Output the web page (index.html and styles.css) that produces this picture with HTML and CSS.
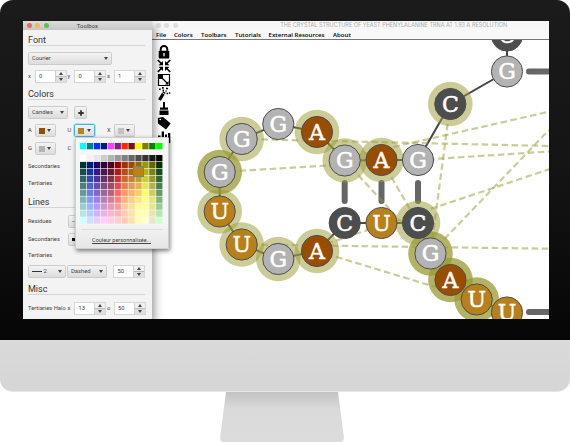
FILE: index.html
```html
<!DOCTYPE html>
<html lang="en">
<head>
<meta charset="utf-8">
<title>RNA structure editor</title>
<link rel="stylesheet" href="styles.css">
</head>
<body>
<div class="monitor">
  <div class="screen">
    <section class="toolbox">
      <header class="titlebar"><i class="dot red"></i><i class="dot amber"></i><i class="dot green"></i><span>Toolbox</span></header>
      <div class="panel">
        <h2>Font</h2>
        <div class="row r-font"><div class="select wide">Courier</div></div>
        <div class="row grid r-xys">
          <div class="cell"><label>x</label><div class="spin"><b>0</b><i></i></div></div>
          <div class="cell"><label>y</label><div class="spin"><b>0</b><i></i></div></div>
          <div class="cell"><label>s</label><div class="spin"><b>1</b><i></i></div></div>
        </div>
        <h2>Colors</h2>
        <div class="row r-font"><div class="select theme">Candies</div><div class="select plus"><svg viewBox="0 0 6 6"><path d="M3 .3v5.400M.3 3h5.400"/></svg></div></div>
        <div class="row grid r-swatch">
          <div class="cell"><label>A</label><div class="select sw"><i class="chip brown"></i></div></div>
          <div class="cell anchor"><label>U</label><div class="select sw focus"><i class="chip gold"></i></div>
            <div class="picker">
              <svg class="basic" id="basic" viewBox="0 0 83 7"></svg>
              <svg class="shades" id="shades" viewBox="0 0 83 69"></svg>
              <i class="picked"></i>
              <div class="custom">Couleur personnalisée...</div>
            </div>
          </div>
          <div class="cell"><label>X</label><div class="select sw"><i class="chip silver"></i></div></div>
        </div>
        <div class="row grid r-swatch2">
          <div class="cell"><label>G</label><div class="select sw"><i class="chip gray"></i></div></div>
          <div class="cell"><label>C</label></div>
        </div>
        <div class="row text t1">Secondaries</div>
        <div class="row text t2">Tertiaries</div>
        <h2 class="lines">Lines</h2>
        <div class="row r-line"><span>Residues</span><div class="select stub">–</div></div>
        <div class="row r-line second"><span>Secondaries</span><div class="select stub"><i class="square"></i></div></div>
        <div class="row text t3">Tertiaries</div>
        <div class="row r-style"><div class="select w38"><i class="stroke"></i>2</div><div class="select w40">Dashed</div><div class="spin"><b>50</b><i></i></div></div>
        <h2>Misc</h2>
        <div class="row grid r-halo">
          <div class="cell"><span>Tertiaries Halo</span></div>
          <div class="cell"><label>s</label><div class="spin"><b>13</b><i></i></div></div>
          <div class="cell"><label>o</label><div class="spin"><b>50</b><i></i></div></div>
        </div>
      </div>
    </section>
    <section class="editor">
      <header class="titlebar light"><i class="dot"></i><i class="dot"></i><i class="dot"></i><span>THE CRYSTAL STRUCTURE OF YEAST PHENYLALANINE TRNA AT 1.93 A RESOLUTION</span></header>
      <nav><span class="m1">File</span><span class="m2">Colors</span><span class="m3">Toolbars</span><span class="m4">Tutorials</span><span class="m5">External Resources</span><span>About</span></nav>
      <div class="workspace">
        <aside>
          <svg viewBox="0 0 14 14"><path d="M3.700 7V4.300a3.300 3.300 0 0 1 6.600 0V7" fill="none" stroke="#000" stroke-width="1.900"/><rect x="1.700" y="5.800" width="10.600" height="7.700" rx="1"/><path d="M7 8v3.300" stroke="#fff" stroke-width="1.300"/></svg>
          <svg viewBox="0 0 14 14"><path d="M.8 1l4 4M13.200 1l-4 4M.8 13l4-4M13.200 13l-4-4" stroke="#000" stroke-width="1.700"/><path d="M6 2v4.200H1.500zM8 2v4.200h4.500zM6 12V7.800H1.500zM8 12V7.800h4.500z"/></svg>
          <svg viewBox="0 0 14 14"><path d="M1.500 1.500h11v11h-11z" fill="#fff" stroke="#000" stroke-width="1.200"/><path d="M1 1h5v5H1zM11.500 11.500V8l-3.500 3.500z"/><path d="M5 5l6 6" stroke="#000" stroke-width="1.300"/></svg>
          <svg viewBox="0 0 14 14"><path d="M2.500 13l4.800-8" stroke="#000" stroke-width="3.200"/><path d="M5 5.500l3 1.800" stroke="#fff" stroke-width=".8"/><path d="M2 2.200h1.700M5 .9h1.700M5.500 3.400H7M9 1.500h2M9.500 6.500h1.700M12 6h1.300M8.500 4h1" stroke="#000" stroke-width="1.600"/></svg>
          <svg viewBox="0 0 14 14"><path d="M6 0h2v5.500h3v2.200H3V5.500h3zM2.500 8.600h9V13h-9z"/></svg>
          <svg viewBox="0 0 14 14"><path d="M.8 2L6 1l7.700 6.500-4.700 6L1 7.500z"/><circle cx="3.300" cy="3.500" r=".8" fill="#fff"/></svg>
          <svg viewBox="0 0 14 14"><path d="M1 5.500h2.500V13H1zM4.700 1.500H7V13H4.700zM8 4.500h2V13H8zM11 3h2.300v10H11z"/></svg>
        </aside>
        <svg class="canvas" id="canvas" viewBox="172 40 377 279"></svg>
      </div>
    </section>
  </div>
</div>
<div class="chin"></div>
<div class="stand"></div>
<script src="app.js"></script>
</body>
</html>
```
FILE: styles.css
```css
* { box-sizing: border-box; }
body { margin: 0; width: 570px; height: 442px; overflow: hidden; background: #fff; font: 5.8px/7px Roboto, "Liberation Sans", sans-serif; color: #444; }
i { font-style: normal; display: block; flex: none; }
.monitor { height: 340px; padding: 21px 21px 21px 23px; border-radius: 13px 13px 0 0; background: linear-gradient(#1b1b1b, #141414 50%, #060606); }
.screen { height: 298px; display: grid; grid-template-columns: 129px 397px; background: #fff; }
.toolbox { position: relative; z-index: 2; height: 298px; background: #f3f3f3; box-shadow: 2px 5px 9px rgba(0,0,0,.45); clip-path: inset(0 -30px 0 0); }
.titlebar { height: 9px; padding-left: 3.500px; display: flex; align-items: center; gap: 3.600px; background: linear-gradient(#dcdcdc, #c6c6c6); }
.titlebar span { margin-left: 24.500px; font-size: 6px; line-height: 8px; }
.dot { width: 5px; height: 5px; border-radius: 50%; background: #dedede; }
.red { background: #f2665c; } .amber { background: #f5bc4a; } .green { background: #5bc251; }
.titlebar.light { background: #f7f7f7; }
.titlebar.light span { margin-left: 99px; font: 5.5px/9px Inter, sans-serif; color: #aaa; white-space: nowrap; }
.panel { padding: 4px 7px 0 5px; }
h2 { margin: 0; height: 12px; border-bottom: 1px solid #d4d4d4; font: 400 9px/12px Roboto, sans-serif; color: #333; }
.row { display: flex; align-items: center; height: 13px; }
.grid { display: grid; grid-template-columns: 39.500px 39.500px 38px; }
.cell { display: flex; align-items: center; height: 13px; white-space: nowrap; }
.cell label { width: 6.500px; flex: none; }
.select { height: 13px; border: 1px solid #cbcbcb; border-radius: 1.500px; background: linear-gradient(#f4f4f4, #dcdcdc); display: flex; align-items: center; padding-left: 3px; position: relative; }
.select:not(.plus):not(.stub)::after { content: ""; margin: 0 3.500px 0 auto; border: 2px solid transparent; border-top: 3px solid #444; border-bottom: 0; }
.wide { width: 84px; } .theme { width: 40px; } .sw { width: 21px; }
.plus { width: 13px; margin-left: 6px; padding: 0 0 0 2.500px; }
.plus svg { width: 6px; height: 6px; stroke: #333; stroke-width: 1.800; }
.chip { width: 6px; height: 6px; }
.brown { background: #994d00; } .gold { background: #b8831c; } .silver { background: #c2c2c2; } .gray { background: #b3b3b3; }
.focus { border: 1px solid #45b4dc; box-shadow: 0 0 0 .5px #7ccdea; }
.spin { width: 32px; height: 13px; display: flex; border: 1px solid #d6d6d6; background: #fff; align-items: center; }
.spin b { font-weight: 400; padding-left: 3.500px; width: 19px; }
.spin > i { width: 11px; height: 11px; background: linear-gradient(#f0f0f0 45%, #bbb 45%, #bbb 54%, #e0e0e0 54%); border-left: 1px solid #d0d0d0; display: flex; flex-direction: column; align-items: center; justify-content: space-between; padding: 1px 0; }
.spin > i::before, .spin > i::after { content: ""; border: 2px solid transparent; }
.spin > i::before { border-bottom: 3px solid #444; border-top: 0; }
.spin > i::after { border-top: 3px solid #444; border-bottom: 0; }
.r-font { margin-top: 6px; }
.r-xys { margin: 5px 0; }
.r-swatch { margin-top: 5px; }
.r-swatch2 { margin-top: 5px; }
.text { height: 8px; } .t1 { margin-top: 7px; } .t2 { margin-top: 9.500px; }
.lines { margin-top: 8px; }
.r-line { margin-top: 7px; }
.r-line span { width: 39.500px; }
.stub { width: 30px; }
.square { width: 3px; height: 3px; background: #111; }
.second { margin-top: 5px; }
.t3 { margin-top: 5.500px; }
.r-style { margin: 6px 0 5px; }
.w38 { width: 38px; margin-right: 1px; } .w40 { width: 40px; margin-right: 6px; }
.stroke { width: 10px; height: 1px; margin-right: 1.500px; background: #333; }
.r-halo { margin-top: 7px; }
.anchor { position: relative; }
.picker { position: absolute; left: 7px; top: 13px; width: 94px; height: 112px; padding: 5px 4px 4px; background: linear-gradient(#f6f6f6 75%, #e6e6e6); border: 1px solid #cfcfcf; border-radius: 1px; box-shadow: 1px 2px 4px rgba(0,0,0,.5); z-index: 5; }
.picker svg { display: block; width: 83px; }
.basic { height: 7px; }
.shades { height: 69px; margin-top: 5px; }
.picked { position: absolute; left: 57px; top: 28px; width: 11px; height: 11px; background: #b8831c; border: 1px solid #389b9b; }
.custom { margin: 5px 1px 0; padding-top: 7px; border-top: 1px solid #ddd; text-align: center; text-decoration: underline; white-space: nowrap; font-size: 5.500px; }
.editor { height: 298px; overflow: hidden; background: #fff; }
nav { height: 10px; display: flex; padding-left: 4px; background: #f8f8f8; border-bottom: 1px solid #777; font: 600 6.100px/9px "Open Sans", sans-serif; color: #000; white-space: nowrap; }
.m1 { width: 18px; } .m2 { width: 27px; } .m3 { width: 34px; } .m4 { width: 33.500px; } .m5 { width: 64.500px; }
.workspace { display: grid; grid-template-columns: 20px 377px; height: 279px; }
aside { padding: 4.500px 0 0 5px; display: flex; flex-direction: column; gap: .3px; }
aside svg { width: 14px; height: 14px; flex: none; }
.canvas { width: 377px; height: 279px; display: block; font: 22px "DejaVu Serif", serif; }
.canvas text { fill: #fff; stroke: #fff; stroke-width: .5px; text-anchor: middle; }
.chin { height: 52px; background: linear-gradient(#dadada, #d5d5d5); border-radius: 0 0 13px 13px; border-bottom: 1px solid #e6e6e6; }
.stand { width: 124px; height: 50px; margin-left: 220px; background: linear-gradient(#c4c2c3, #dadada 17px, #dcdcdc); clip-path: polygon(6px 0, 118px 0, 124px 46px, 123px 49px, 121px 50px, 3px 50px, 1px 49px, 0 46px); }
```
FILE: app.js
```js
const basic = ['#00ffff', '#008080', '#0033ff', '#001a80', '#ff40ff', '#802080', '#ff2600', '#801010', '#ffff00', '#808000', '#008000', '#00ff00'];
const grays = [255, 242, 230, 204, 179, 153, 128, 102, 77, 51, 26, 0];
const dark = [[0,51,51],[0,26,128],[26,0,104],[51,0,51],[77,0,26],[153,0,0],[153,51,0],[153,77,0],[153,102,0],[153,153,0],[102,102,0],[0,51,0]];
const pale = [[204,255,255],[204,224,255],[230,204,255],[255,204,255],[255,204,230],[255,204,204],[255,204,179],[255,224,166],[255,255,179],[255,255,204],[230,230,204],[204,255,204]];
const cell = (c, col, row) => `<rect x="${(col * 6.92).toFixed(2)}" y="${(row * 6.92).toFixed(2)}" width="6.3" height="6.3" fill="${c}"/>`;
document.getElementById('basic').innerHTML = basic.map((c, i) => cell(c, i, 0)).join('');
let shades = grays.map((g, i) => cell(`rgb(${g},${g},${g})`, i, 0)).join('');
for (let k = 0; k < 9; k++) {
  shades += dark.map((c, i) => cell(`rgb(${c.map((v, j) => Math.round(Math.min(pale[i][j], v + 25.5 * k)))})`, i, k + 1)).join('');
}
document.getElementById('shades').innerHTML = shades;

// letter, x, y, halo strength
const nodes = [['C',507,35.5,0],['G',507,71.5,0],['C',450.3,104,.5],['G',418,160,0],['A',381.5,160,.5],['G',344.7,160.5,.5],['A',317,132,.5],['G',278.3,124,0],['G',241.7,139,.5],['G',219.7,172,.75],['U',219.7,211.5,.5],['U',241.7,244.5,.5],['G',278.3,259,.5],['A',317,251,.5],['C',344.7,223,0],['U',381.5,223,0],['C',418,223,.5],['G',430.5,253.5,.75],['A',450.5,280,.75],['U',476.7,299.5,.75],['U',507,312.5,0]];
const fill = { A: '#994d00', U: '#b8801a', G: '#b3b3b3', C: '#4d4d4d' };
const tertiary = [[241.7,139,549,146],[219.7,172,344.7,164.5],[418,160,549,151.5],[450.3,104,430.5,253.5],[344.7,160.5,430.5,253.5],[381.5,160,418,223],[344.7,158,549,111.7],[317,247,549,169.3],[430.5,253.5,549,130],[241.7,244.5,549,248.7],[317,251,476.7,299.5]];
const bonds = [[344.7,183,344.7,201],[381.5,183,381.5,201],[418,183,418,201],[529,71.5,560,71.5],[529,312,560,312]];
const line = ([a, b, c, d], attrs) => `<line x1="${a}" y1="${b}" x2="${c}" y2="${d}" ${attrs}/>`;
let out = `<polyline points="${nodes.map(n => n[1] + ',' + n[2]).join(' ')}" fill="none" stroke="#444" stroke-width="2"/>`;
out += bonds.map(b => line(b, 'stroke="#666" stroke-width="6" stroke-linecap="round"')).join('');
out += tertiary.map(t => line(t, 'stroke="#999933" stroke-opacity=".5" stroke-width="2.2" stroke-dasharray="6.5 3.5"')).join('');
out += nodes.filter(n => n[3]).map(n => `<circle cx="${n[1]}" cy="${n[2]}" r="22.3" fill="#999933" fill-opacity="${n[3]}"/>`).join('');
out += nodes.map(([l, x, y]) => `<circle cx="${x}" cy="${y}" r="15.6" fill="${fill[l]}" stroke="#4d4d4d"/><text x="${x}" y="${y + 7.8}">${l}</text>`).join('');
document.getElementById('canvas').innerHTML = out;
```
